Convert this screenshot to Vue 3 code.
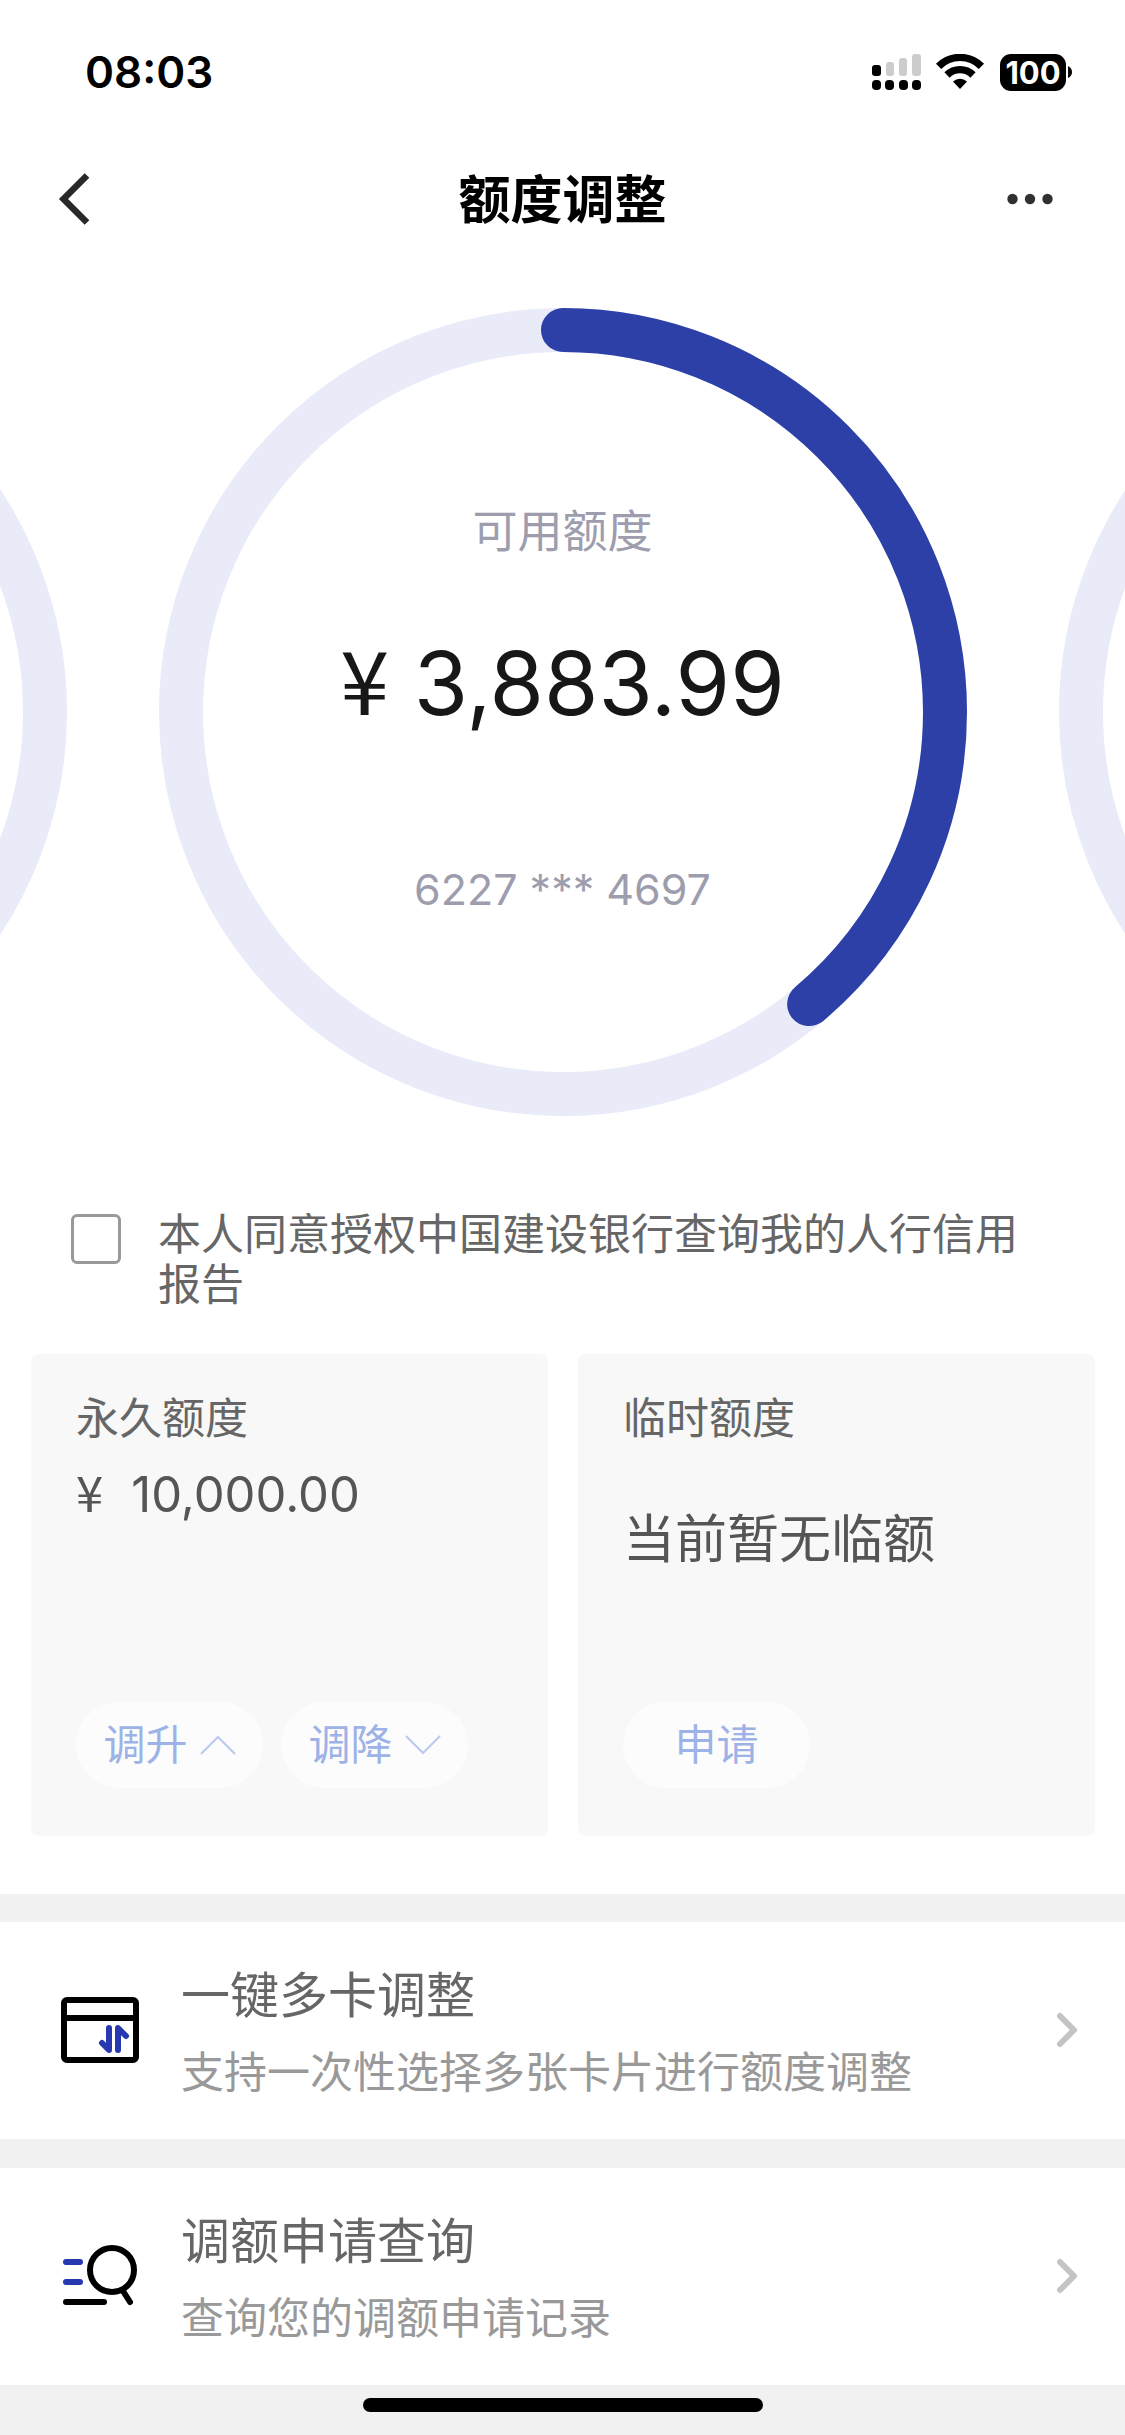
<script setup>
import { ref } from 'vue'

const agreed = ref(false)
const total = 10000
const available = 3883.99

const radius = 382
const circumference = 2 * Math.PI * radius
const dash = `${(circumference * available) / total} ${circumference}`
</script>

<template>
  <div class="page">
    <div class="status">
      <span class="time">08:03</span>
      <div class="status-icons">
        <svg width="50" height="36" viewBox="0 0 50 36" aria-hidden="true">
          <rect x="0" y="11" width="9" height="11" rx="3" fill="#000" />
          <rect x="14" y="8" width="8" height="14" rx="3" fill="#ccc" />
          <rect x="27" y="4" width="8" height="18" rx="3" fill="#ccc" />
          <rect x="40" y="0" width="9" height="22" rx="3" fill="#ccc" />
          <rect x="0" y="26" width="9" height="10" rx="4" fill="#000" />
          <rect x="13" y="26" width="9" height="10" rx="4" fill="#000" />
          <rect x="27" y="26" width="9" height="10" rx="4" fill="#000" />
          <rect x="40" y="26" width="9" height="10" rx="4" fill="#000" />
        </svg>
        <svg class="wifi" width="48" height="36" viewBox="0 0 48 36" aria-hidden="true">
          <path d="M2.600 12.400a30 30 0 0 1 42.800 0" fill="none" stroke="#000" stroke-width="7.400" />
          <path d="M11 21a18.500 18.500 0 0 1 26 0" fill="none" stroke="#000" stroke-width="7.400" />
          <path d="M17 27.400a10.500 10.500 0 0 1 14 0L24 35z" fill="#000" />
        </svg>
        <div class="battery">
          <span class="level">100</span>
          <svg width="4" height="12" viewBox="0 0 4 12" aria-hidden="true">
            <path d="M0 0q4 2 4 6t-4 6z" fill="#000" />
          </svg>
        </div>
      </div>
    </div>

    <header class="nav">
      <button type="button" class="nav-btn" aria-label="返回">
        <svg width="32" height="52" viewBox="0 0 32 52">
          <path d="M29 2.500 5.500 26 29 49.500" fill="none" stroke="#262829" stroke-width="6.500" />
        </svg>
      </button>
      <h1>额度调整</h1>
      <button type="button" class="nav-btn more" aria-label="更多">
        <svg width="46" height="12" viewBox="0 0 46 12" fill="#303133">
          <circle cx="5.500" cy="6" r="5.200" />
          <circle cx="23" cy="6" r="5.200" />
          <circle cx="40.500" cy="6" r="5.200" />
        </svg>
      </button>
    </header>

    <section class="carousel">
      <svg class="ring" viewBox="0 0 808 808" aria-hidden="true">
        <circle cx="404" cy="404" :r="radius" class="track" />
      </svg>
      <div class="gauge">
        <svg class="ring" viewBox="0 0 808 808" aria-hidden="true">
          <circle cx="404" cy="404" :r="radius" class="track" />
          <circle
            cx="404"
            cy="404"
            :r="radius"
            class="value"
            :stroke-dasharray="dash"
            transform="rotate(-90 404 404)"
          />
        </svg>
        <div class="gauge-text">
          <p class="gauge-label">可用额度</p>
          <p class="gauge-amount"><span class="yen">¥</span> 3,883.99</p>
          <p class="card-no">6227 *** 4697</p>
        </div>
      </div>
      <svg class="ring" viewBox="0 0 808 808" aria-hidden="true">
        <circle cx="404" cy="404" :r="radius" class="track" />
      </svg>
    </section>

    <label class="agree">
      <input v-model="agreed" type="checkbox" />
      <span>本人同意授权中国建设银行查询我的人行信用报告</span>
    </label>

    <section class="cards">
      <article class="card">
        <h2>永久额度</h2>
        <p class="fixed"><span class="yen">¥</span><span>10,000.00</span></p>
        <div class="actions">
          <button type="button" class="pill">
            调升
            <svg width="36" height="20" viewBox="0 0 36 20">
              <path d="M1 19 18 2l17 17" />
            </svg>
          </button>
          <button type="button" class="pill">
            调降
            <svg width="36" height="20" viewBox="0 0 36 20">
              <path d="M1 1l17 17L35 1" />
            </svg>
          </button>
        </div>
      </article>
      <article class="card">
        <h2>临时额度</h2>
        <p class="temp">当前暂无临额</p>
        <div class="actions">
          <button type="button" class="pill">申请</button>
        </div>
      </article>
    </section>

    <nav class="links">
      <a href="#multi" class="row">
        <svg class="row-icon" width="80" height="68" viewBox="0 0 80 68" fill="none">
          <rect x="4" y="4" width="72" height="60" rx="3" stroke="#000" stroke-width="6" />
          <path d="M4 22h72" stroke="#000" stroke-width="6" />
          <path
            d="M49 32v22l-7-7M58 54V32l8 8"
            stroke="#2639b0"
            stroke-width="6"
            stroke-linecap="round"
            stroke-linejoin="round"
          />
        </svg>
        <span class="row-text">
          <span class="row-title">一键多卡调整</span>
          <span class="row-sub">支持一次性选择多张卡片进行额度调整</span>
        </span>
        <svg class="chevron" width="22" height="36" viewBox="0 0 22 36">
          <path d="M4 4l14 14L4 32" />
        </svg>
      </a>
      <a href="#records" class="row">
        <svg class="row-icon" width="80" height="68" viewBox="0 0 80 68" fill="none" stroke-width="6" stroke-linecap="round">
          <path d="M6 20h14M6 40h14" stroke="#2639b0" />
          <path d="M6 60h38" stroke="#000" />
          <circle cx="52" cy="28" r="22" stroke="#000" />
          <path d="M63 49l7 11" stroke="#000" />
        </svg>
        <span class="row-text">
          <span class="row-title">调额申请查询</span>
          <span class="row-sub">查询您的调额申请记录</span>
        </span>
        <svg class="chevron" width="22" height="36" viewBox="0 0 22 36">
          <path d="M4 4l14 14L4 32" />
        </svg>
      </a>
      <div class="home"></div>
    </nav>
  </div>
</template>

<style>
body {
  margin: 0;
  background: #fff;
}
</style>

<style scoped>
.page {
  display: flex;
  flex-direction: column;
  min-height: 100vh;
  background: #fff;
  font-family: Inter, "Noto Sans CJK SC", sans-serif;
  color: #666;
}

h1,
h2,
p {
  margin: 0;
  font-weight: 400;
}

button {
  border: 0;
  padding: 0;
  font-family: inherit;
  cursor: pointer;
}

svg {
  display: block;
  flex: none;
}

.status {
  display: flex;
  align-items: center;
  justify-content: space-between;
  height: 144px;
  padding: 0 53px 0 85px;
}

.time {
  font-size: 44px;
  font-weight: 600;
  color: #000;
}

.status-icons {
  display: flex;
  align-items: center;
}

.wifi {
  margin: 0 16px 0 14px;
}

.battery {
  display: flex;
  align-items: center;
  gap: 2px;
}

.level {
  width: 66px;
  border-radius: 11px;
  background: #000;
  color: #fff;
  font-size: 31px;
  font-weight: 700;
  line-height: 37px;
  text-align: center;
}

.nav {
  display: grid;
  grid-template-columns: 1fr auto 1fr;
  align-items: center;
  height: 110px;
  padding: 0 58px;
}

.nav-btn {
  justify-self: start;
  background: none;
}

.nav-btn.more {
  justify-self: end;
  margin-right: 14px;
}

.nav h1 {
  padding-top: 4px;
  font-size: 52px;
  font-weight: 700;
  line-height: 60px;
  color: #000;
}

.carousel {
  display: flex;
  justify-content: center;
  gap: 92px;
  margin-top: 54px;
  overflow: hidden;
}

.ring {
  width: 808px;
  height: 808px;
}

.track,
.value {
  fill: none;
  stroke-width: 44px;
}

.track {
  stroke: #e9ebf9;
}

.value {
  stroke: #2d40a7;
  stroke-linecap: round;
}

.gauge {
  display: grid;
  flex: none;
}

.gauge > * {
  grid-area: 1 / 1;
}

.gauge-text {
  padding-top: 194px;
  text-align: center;
}

.gauge-label,
.card-no {
  font-size: 45px;
  line-height: 60px;
  color: #9d9dae;
}

.gauge-amount {
  margin-top: 71px;
  font-size: 88px;
  line-height: 100px;
  color: #171717;
}

.yen {
  font-family: "Noto Sans CJK SC", sans-serif;
  line-height: 1;
}

.card-no {
  margin-top: 126px;
  font-size: 43px;
}

.agree {
  display: flex;
  align-items: flex-start;
  gap: 37px;
  padding: 93px 72px 0 71px;
  font-size: 43px;
  line-height: 50px;
}

.agree input {
  flex: none;
  appearance: none;
  width: 50px;
  height: 50px;
  margin: 5px 0 0;
  border: 3px solid #999;
  border-radius: 6px;
  background: #fff;
}

.agree input:checked {
  background: #2d40a7;
}

.cards {
  display: grid;
  grid-template-columns: 1fr 1fr;
  gap: 30px;
  padding: 45px 30px 58px 31px;
}

.card {
  display: flex;
  flex-direction: column;
  box-sizing: border-box;
  min-height: 482px;
  padding: 34px 45px 48px;
  border-radius: 8px;
  background: #f8f8f8;
}

.card h2 {
  font-size: 43px;
  line-height: 60px;
}

.fixed,
.temp {
  font-size: 52px;
  line-height: 64px;
  color: #555;
}

.fixed {
  display: flex;
  align-items: baseline;
  gap: 28px;
  margin-top: 15px;
  font-size: 49px;
}

.temp {
  margin-top: 60px;
}

.actions {
  display: flex;
  gap: 18px;
  margin-top: auto;
}

.pill {
  display: flex;
  align-items: center;
  justify-content: center;
  gap: 12px;
  width: 187px;
  height: 86px;
  border-radius: 43px;
  background: #fcfcfc;
  color: #9db2e6;
  font-size: 42px;
  line-height: 60px;
}

.pill path {
  fill: none;
  stroke: #b9c9ef;
  stroke-width: 2px;
}

.links {
  display: flex;
  flex: 1;
  flex-direction: column;
  gap: 29px;
  padding-top: 28px;
  background: #f1f1f1;
}

.row {
  display: flex;
  align-items: center;
  padding: 36px 47px 37px 60px;
  background: #fff;
  color: inherit;
  text-decoration: none;
}

.row-text {
  display: flex;
  flex: 1;
  flex-direction: column;
  gap: 16px;
  margin-left: 41px;
  padding-top: 8px;
  line-height: 60px;
}

.row-title {
  font-size: 49px;
}

.row-sub {
  font-size: 43px;
  color: #999;
}

.chevron path {
  fill: none;
  stroke: #c4c4c6;
  stroke-width: 6px;
  stroke-linecap: round;
  stroke-linejoin: round;
}

.home {
  align-self: center;
  width: 400px;
  height: 14px;
  margin-top: -16px;
  border-radius: 7px;
  background: #000;
}
</style>
